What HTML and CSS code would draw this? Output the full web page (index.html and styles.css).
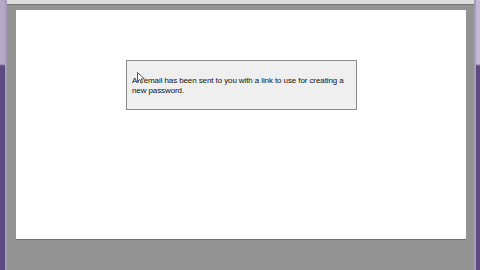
FILE: index.html
```html
<!DOCTYPE html>
<html>
<head>
    <meta charset="utf-8" />
    <title>Password reset</title>
    <link rel="stylesheet" href="styles.css">
</head>
<body>
    <div class="frame">
        <div class="edge edge-left"></div>
        <div class="main">
            <div class="toolbar"></div>
            <div class="viewport">
                <div class="page">
                    <div class="msgbox">
                        An email has been sent to you with a link to use for creating a new password.
                        <svg class="cursor" width="8" height="12" viewBox="0 0 8 12">
                            <path d="M0.5 0.5 L0.5 9.5 L2.8 7.4 L4.4 11 L5.8 10.4 L4.2 6.9 L7.3 6.9 Z" fill="#fff" stroke="#333" stroke-width="0.8"/>
                        </svg>
                    </div>
                </div>
            </div>
        </div>
        <div class="edge edge-right"></div>
    </div>
</body>
</html>
```

FILE: styles.css
```css
html, body{
    margin: 0;
    padding: 0;
    width: 480px;
    height: 270px;
    overflow: hidden;
    background: #8f8f8f;
    font-family: "Liberation Sans", Arial, sans-serif;
}
.frame{
    display: flex;
    height: 270px;
}
.edge{
    width: 7px;
    flex: none;
}
.edge-left{
    background: linear-gradient(to bottom, #b4a8c8 0, #b4a8c8 64px, #5c4a80 66px, #5c4a80 100%);
    border-right: 2px solid #a79bbd;
    width: 5px;
}
.edge-right{
    width: 4px;
    border-left: 2px solid #a79bbd;
    background: linear-gradient(to bottom, #c2b8d4 0, #c2b8d4 64px, #5c4a80 66px, #5c4a80 100%);
}
.main{
    flex: 1;
    display: flex;
    flex-direction: column;
}
.toolbar{
    height: 4px;
    background: #dedede;
    border-bottom: 1px solid #707070;
}
.viewport{
    flex: 1;
    background: #939393;
    padding: 5px 8px 30px 9px;
    display: flex;
}
.page{
    flex: 1;
    background: #fff;
    border-bottom: 1px solid #6e6e6e;
    padding: 50px 0 0 110px;
}
.msgbox{
    position: relative;
    width: 218px;
    height: 33px;
    padding: 15px 6px 0 5px;
    background: #efefef;
    border: 1px solid #8a8a8a;
    font-size: 8px;
    line-height: 10px;
    letter-spacing: -0.1px;
    color: #111;
}
.cursor{
    position: absolute;
    left: 10px;
    top: 11px;
}
```
